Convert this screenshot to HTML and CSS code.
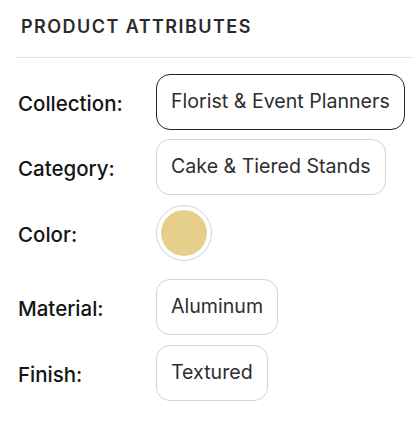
FILE: index.html
```html
<!DOCTYPE html>
<html lang="en">
<head>
<meta charset="utf-8">
<title>Product Attributes</title>
<link rel="stylesheet" href="styles.css">
</head>
<body>
<section class="attrs">
  <h2 class="attrs__title">PRODUCT ATTRIBUTES</h2>
  <div class="attrs__list">
    <div class="row">
      <span class="row__label">Collection:</span>
      <span class="pill pill--active">Florist &amp; Event Planners</span>
    </div>
    <div class="row">
      <span class="row__label">Category:</span>
      <span class="pill">Cake &amp; Tiered Stands</span>
    </div>
    <div class="row row--color">
      <span class="row__label">Color:</span>
      <span class="swatch"><span class="swatch__dot"></span></span>
    </div>
    <div class="row">
      <span class="row__label">Material:</span>
      <span class="pill">Aluminum</span>
    </div>
    <div class="row row--last">
      <span class="row__label">Finish:</span>
      <span class="pill">Textured</span>
    </div>
  </div>
</section>
</body>
</html>
```
FILE: styles.css
```css
* { box-sizing: border-box; }
html, body { margin: 0; padding: 0; background: #fff; }
body {
  font-family: Inter, "Noto Sans", "Liberation Sans", sans-serif;
  color: #111;
}
.attrs { width: 413px; }
.attrs__title {
  margin: 0 0 0 15px;
  padding: 17px 0 20px 6px;
  font-size: 18px;
  line-height: 20px;
  font-weight: 600;
  letter-spacing: 1.45px;
  color: #2b2b2b;
  border-bottom: 1px solid #e3e3e3;
}
.attrs__list {
  display: flex;
  flex-direction: column;
  gap: 9px;
  padding: 16px 0 0 18px;
}
.row {
  display: flex;
  align-items: center;
}
.row--color { margin-top: 1px; margin-bottom: 9px; }
.row--last { margin-top: 1px; }
.row__label {
  width: 138px;
  flex: none;
  padding-top: 4px;
  font-size: 20.5px;
  line-height: 24px;
  font-weight: 500;
  color: #151515;
}
.pill {
  display: inline-flex;
  align-items: center;
  height: 56px;
  padding: 0 14px 2px;
  border: 1px solid #d3d3d3;
  border-radius: 14px;
  font-size: 19.6px;
  line-height: 24px;
  color: #2e2e2e;
  white-space: nowrap;
}
.pill--active { border-color: #222; }
.swatch {
  display: block;
  width: 56px;
  height: 56px;
  padding: 4px;
  border: 1px solid #d3d3d3;
  border-radius: 50%;
}
.swatch__dot {
  display: block;
  width: 100%;
  height: 100%;
  border-radius: 50%;
  background: #e5cf8b;
}
```
